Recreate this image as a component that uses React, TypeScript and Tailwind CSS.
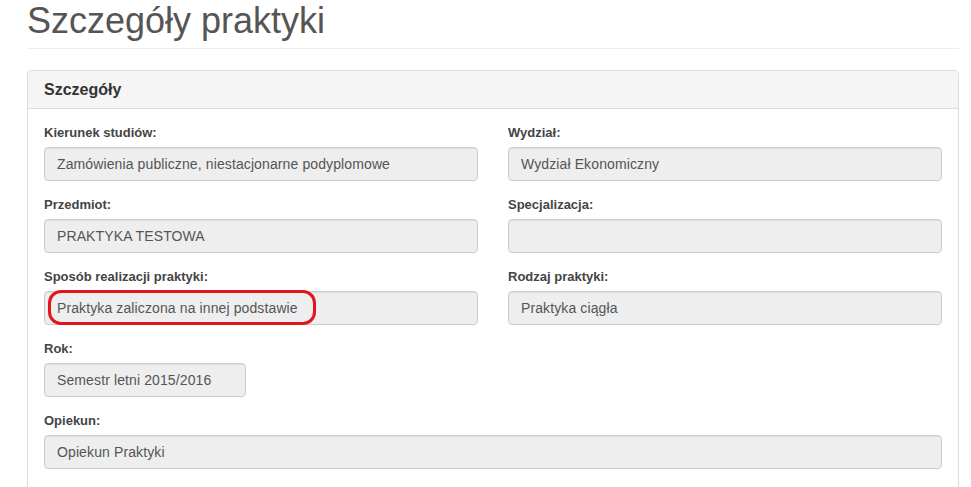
import { ReactNode } from "react";

type Field = {
  label: string;
  value: string;
  width?: string;
  marked?: boolean;
};

const rows: Field[][] = [
  [
    {
      label: "Kierunek studiów:",
      value: "Zamówienia publiczne, niestacjonarne podyplomowe",
    },
    { label: "Wydział:", value: "Wydział Ekonomiczny" },
  ],
  [
    { label: "Przedmiot:", value: "PRAKTYKA TESTOWA" },
    { label: "Specjalizacja:", value: "" },
  ],
  [
    {
      label: "Sposób realizacji praktyki:",
      value: "Praktyka zaliczona na innej podstawie",
      marked: true,
    },
    { label: "Rodzaj praktyki:", value: "Praktyka ciągła" },
  ],
];

function FormField({ label, value, width = "w-full", marked }: Field) {
  return (
    <div className="mb-[15px]">
      <label className="mb-[5px] block text-[13px] leading-[18px] font-bold text-[#444]">
        {label}
      </label>
      <div className={`relative ${width}`}>
        <div className="h-[34px] rounded-[4px] border border-[#ccc] bg-[#eee] px-[12px] text-[14px] leading-[32px] tracking-[0.008em] text-[#555] shadow-[inset_0_1px_1px_rgba(0,0,0,0.075)]">
          {value}
        </div>
        {/* red annotation drawn over the screenshot */}
        {marked && (
          <div className="absolute top-[-1px] left-[4px] h-[35px] w-[268px] rounded-[13px] border-[3.5px] border-[#e3141c]" />
        )}
      </div>
    </div>
  );
}

function Panel({ title, children }: { title: string; children: ReactNode }) {
  return (
    <div className="w-[932px] rounded-[4px] border border-[#ddd] bg-white shadow-[0_1px_1px_rgba(0,0,0,0.05)]">
      <div className="rounded-t-[4px] border-b border-[#ddd] bg-[#f5f5f5] px-[16px] pt-[10px] pb-[10px] text-[16px] leading-[17px] font-bold text-[#333]">
        {title}
      </div>
      <div className="px-[16px] pt-[15px] pb-[15px]">{children}</div>
    </div>
  );
}

export default function App() {
  return (
    <div className="min-h-[487px] overflow-hidden bg-white pl-[27px] font-['Liberation_Sans',Arial,sans-serif]">
      <div className="w-[932px] border-b border-[#eee] pt-[1px] pb-[7px]">
        <h1 className="text-[36px] leading-[40px] font-normal text-[#555]">
          Szczegóły praktyki
        </h1>
      </div>

      <div className="mt-[21px]">
        <Panel title="Szczegóły">
          {rows.map((row, i) => (
            <div key={i} className="grid grid-cols-2 gap-x-[30px]">
              {row.map((field) => (
                <FormField key={field.label} {...field} />
              ))}
            </div>
          ))}
          <FormField label="Rok:" value="Semestr letni 2015/2016" width="w-[202px]" />
          <FormField label="Opiekun:" value="Opiekun Praktyki" />
        </Panel>
      </div>
    </div>
  );
}
